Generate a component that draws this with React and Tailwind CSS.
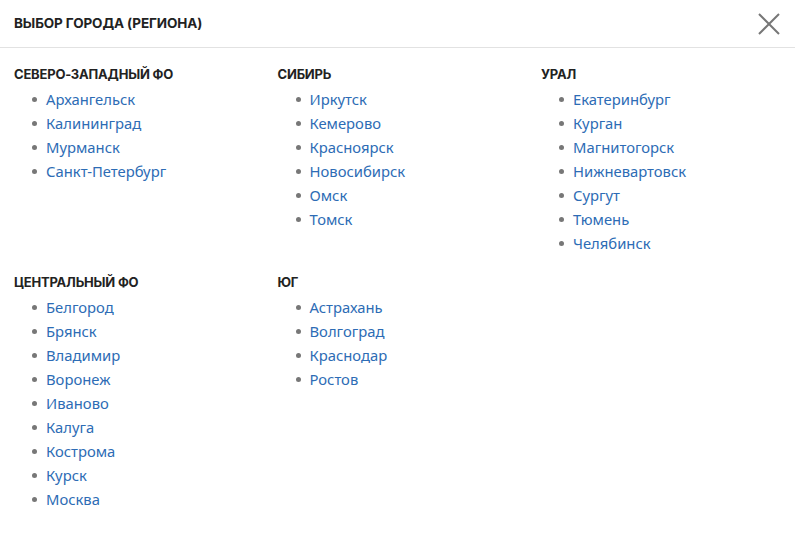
import React from "react";

const REGIONS = [
  [
    { title: "СЕВЕРО-ЗАПАДНЫЙ ФО", cities: ["Архангельск", "Калининград", "Мурманск", "Санкт-Петербург"] },
    { title: "СИБИРЬ", cities: ["Иркутск", "Кемерово", "Красноярск", "Новосибирск", "Омск", "Томск"] },
    { title: "УРАЛ", cities: ["Екатеринбург", "Курган", "Магнитогорск", "Нижневартовск", "Сургут", "Тюмень", "Челябинск"] },
  ],
  [
    { title: "ЦЕНТРАЛЬНЫЙ ФО", cities: ["Белгород", "Брянск", "Владимир", "Воронеж", "Иваново", "Калуга", "Кострома", "Курск", "Москва"] },
    { title: "ЮГ", cities: ["Астрахань", "Волгоград", "Краснодар", "Ростов"] },
  ],
];

function Region({ region }) {
  return (
    <div className="w-[263.5px] shrink-0">
      <h3 className="h-5 leading-5 text-[13px] font-bold text-[#222] tracking-[-0.2px] font-['Inter',sans-serif]">
        {region.title}
      </h3>
      <ul className="mt-[3px]">
        {region.cities.map((c) => (
          <li key={c} className="h-6 flex items-center pl-[18px]">
            <span className="w-[5px] h-[5px] rounded-full bg-[#777] shrink-0" />
            <a href="#" className="ml-[9px] text-[14.8px] text-[#2d6cb5] font-['Noto_Sans',sans-serif]">
              {c}
            </a>
          </li>
        ))}
      </ul>
    </div>
  );
}

export default function App() {
  return (
    <div className="w-[795px] h-[535px] bg-white overflow-hidden">
      <div className="h-12 flex items-center justify-between pl-[14px] pr-[14px] border-b border-[#e2e2e2]">
        <h2 className="text-[13.5px] font-bold text-[#222] tracking-[-0.1px] font-['Inter',sans-serif]">
          ВЫБОР ГОРОДА (РЕГИОНА)
        </h2>
        <button className="text-[#777]">
          <svg width="24" height="24" viewBox="0 0 24 24" fill="none" stroke="currentColor" strokeWidth="2">
            <path d="M2 2L22 22M22 2L2 22" />
          </svg>
        </button>
      </div>
      <div className="pt-4 pl-[14px]">
        {REGIONS.map((row, i) => (
          <div key={i} className="flex mb-[17px]">
            {row.map((r) => (
              <Region key={r.title} region={r} />
            ))}
          </div>
        ))}
      </div>
    </div>
  );
}
